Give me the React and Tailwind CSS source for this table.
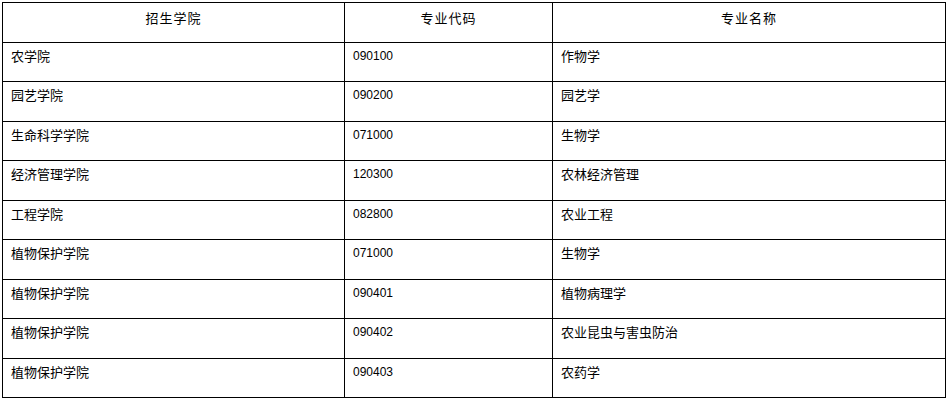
const header = ["招生学院", "专业代码", "专业名称"];
const rows = [
  ["农学院", "090100", "作物学"],
  ["园艺学院", "090200", "园艺学"],
  ["生命科学学院", "071000", "生物学"],
  ["经济管理学院", "120300", "农林经济管理"],
  ["工程学院", "082800", "农业工程"],
  ["植物保护学院", "071000", "生物学"],
  ["植物保护学院", "090401", "植物病理学"],
  ["植物保护学院", "090402", "农业昆虫与害虫防治"],
  ["植物保护学院", "090403", "农药学"],
];

export default function App() {
  return (
    <div className="w-[948px] h-[400px] bg-white pt-[2px] pl-[2px]" style={{ fontFamily: '"Noto Sans CJK SC", "Liberation Sans", sans-serif' }}>
      <div className="w-[944px] border border-black text-[13px] leading-[20px] text-black">
        <div className="grid grid-cols-[341px_1px_207px_1px_392px] h-[39px]">
          <div className="pt-[5px] text-center tracking-[1px]">{header[0]}</div>
          <div className="bg-black" />
          <div className="pt-[5px] text-center tracking-[1px]">{header[1]}</div>
          <div className="bg-black" />
          <div className="pt-[5px] text-center tracking-[1px]">{header[2]}</div>
        </div>
        {rows.map((r, i) => (
          <div key={i} className={`grid grid-cols-[341px_1px_207px_1px_392px] border-t border-black ${i % 2 === 0 ? "h-[39px]" : "h-[40px]"}`}>
            <div className="pt-[3px] pl-[8px]">{r[0]}</div>
            <div className="bg-black" />
            <div className="pt-[3px] pl-[8px] text-[12px] font-['Liberation_Sans',sans-serif]">{r[1]}</div>
            <div className="bg-black" />
            <div className="pt-[3px] pl-[8px]">{r[2]}</div>
          </div>
        ))}
      </div>
    </div>
  );
}
